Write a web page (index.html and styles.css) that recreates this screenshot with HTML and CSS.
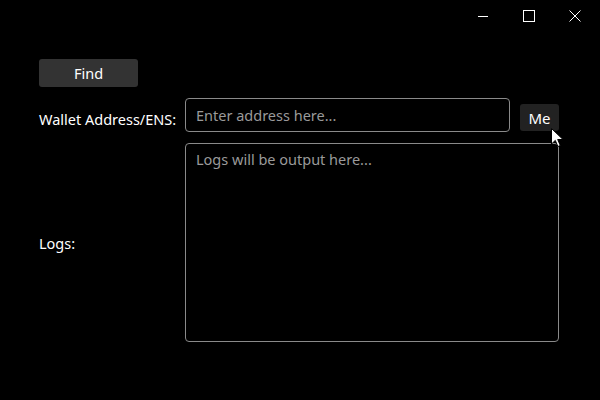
FILE: index.html
```html
<!DOCTYPE html>
<html lang="en">
<head>
    <meta charset="UTF-8">
    <meta name="viewport" content="width=device-width, initial-scale=1.0">
    <title>Wallet Logs</title>
    <link rel="stylesheet" href="styles.css">
</head>
<body>
    <div class="window">
        <div class="title-bar">
            <button class="caption-btn" aria-label="Minimize">
                <svg width="12" height="12" viewBox="0 0 12 12"><path d="M1 6.5h10" stroke="#fff" stroke-width="1"/></svg>
            </button>
            <button class="caption-btn" aria-label="Maximize">
                <svg width="12" height="12" viewBox="0 0 12 12"><rect x="0.5" y="0.5" width="11" height="11" fill="none" stroke="#fff" stroke-width="1"/></svg>
            </button>
            <button class="caption-btn" aria-label="Close">
                <svg width="12" height="12" viewBox="0 0 12 12"><path d="M0.5 0.5l11 11M11.5 0.5l-11 11" stroke="#fff" stroke-width="1"/></svg>
            </button>
        </div>

        <div class="content">
            <button class="find-btn">Find</button>

            <div class="form">
                <label class="label label-address" for="address">Wallet Address/ENS:</label>
                <div class="address-row">
                    <input id="address" class="address-input" type="text" placeholder="Enter address here...">
                    <button class="me-btn">Me</button>
                </div>

                <label class="label" for="logs">Logs:</label>
                <textarea id="logs" class="logs" placeholder="Logs will be output here..."></textarea>
            </div>
        </div>

        <svg class="cursor" width="13" height="20" viewBox="0 0 13 20">
            <path d="M0.5 0.5v15.5l3.8-3.6 2.6 6.1 2.4-1-2.6-6h5.3z" fill="#fff" stroke="#000" stroke-width="1"/>
        </svg>
    </div>
</body>
</html>
```

FILE: styles.css
```css
* {
    box-sizing: border-box;
}

body {
    margin: 0;
    background-color: #000;
    color: #fff;
    font-family: "Noto Sans", "Open Sans", sans-serif;
    font-size: 14px;
}

.window {
    position: relative;
    width: 600px;
    height: 400px;
    overflow: hidden;
}

.title-bar {
    display: flex;
    justify-content: flex-end;
    height: 31px;
    padding-right: 2px;
}

.caption-btn {
    width: 46px;
    height: 31px;
    border: none;
    background: transparent;
    display: flex;
    align-items: center;
    justify-content: center;
    padding: 0;
}

.caption-btn svg {
    display: block;
}

.content {
    padding: 28px 0 0 39px;
}

.find-btn {
    width: 99px;
    height: 28px;
    border: none;
    border-radius: 3px;
    background-color: #333;
    color: #fff;
    font-family: inherit;
    font-size: 14.5px;
    padding: 0;
}

.form {
    display: grid;
    grid-template-columns: 146px auto;
    row-gap: 11px;
    align-items: center;
    margin-top: 11px;
}

.label {
    color: #fff;
    font-size: 14.5px;
}

.label-address {
    padding-top: 7px;
}

.address-row {
    display: flex;
    align-items: center;
    gap: 10px;
}

.address-input {
    width: 325px;
    height: 34px;
    border: 1px solid #8a8a8a;
    border-radius: 4px;
    background-color: #000;
    color: #fff;
    font-family: inherit;
    font-size: 14.5px;
    padding: 0 10px;
    outline: none;
}

.address-input::placeholder,
.logs::placeholder {
    color: #9a9a9a;
}

.me-btn {
    width: 39px;
    height: 27px;
    margin-top: 5px;
    border: none;
    border-radius: 3px;
    background-color: #222;
    color: #fff;
    font-family: inherit;
    font-size: 15px;
    padding: 0;
}

.logs {
    width: 374px;
    height: 199px;
    border: 1px solid #8a8a8a;
    border-radius: 4px;
    background-color: #000;
    color: #fff;
    font-family: inherit;
    font-size: 14.5px;
    padding: 5px 10px;
    resize: none;
    outline: none;
}

.cursor {
    position: absolute;
    left: 551px;
    top: 128px;
}
```
